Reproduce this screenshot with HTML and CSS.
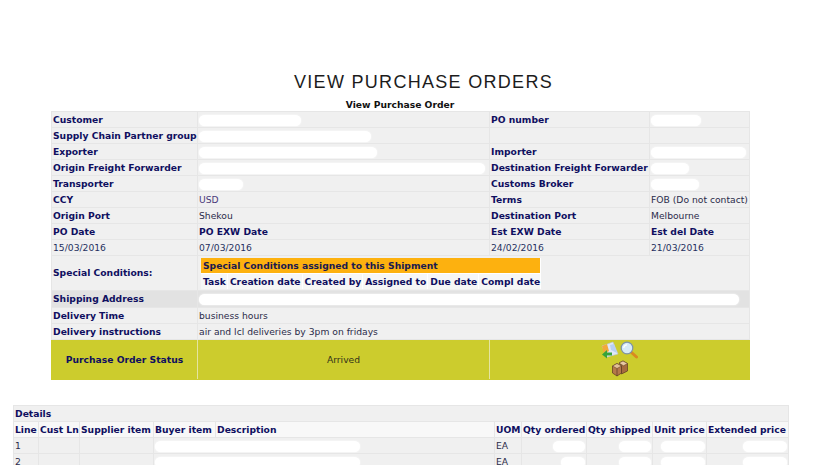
FILE: index.html
```html
<!DOCTYPE html>
<html lang="en">
<head>
    <meta charset="UTF-8">
    <title>View Purchase Orders</title>
    <link rel="stylesheet" href="styles.css">
</head>
<body>
    <h1 class="page-title">VIEW PURCHASE ORDERS</h1>
    <h2 class="order-caption">View Purchase Order</h2>

    <table class="grid order">
        <colgroup>
            <col class="c-label"><col class="c-value"><col class="c-label2"><col class="c-value2">
        </colgroup>
        <tr>
            <th>Customer</th><td><span class="redact r-102"></span></td>
            <th>PO number</th><td><span class="redact r-50"></span></td>
        </tr>
        <tr>
            <th>Supply Chain Partner group</th><td><span class="redact r-172"></span></td>
            <th></th><td></td>
        </tr>
        <tr>
            <th>Exporter</th><td><span class="redact r-178"></span></td>
            <th>Importer</th><td><span class="redact r-95"></span></td>
        </tr>
        <tr>
            <th>Origin Freight Forwarder</th><td><span class="redact r-286"></span></td>
            <th>Destination Freight Forwarder</th><td><span class="redact r-38"></span></td>
        </tr>
        <tr>
            <th>Transporter</th><td><span class="redact r-44"></span></td>
            <th>Customs Broker</th><td><span class="redact r-48"></span></td>
        </tr>
        <tr>
            <th>CCY</th><td class="ccy">USD</td>
            <th>Terms</th><td>FOB (Do not contact)</td>
        </tr>
        <tr>
            <th>Origin Port</th><td>Shekou</td>
            <th>Destination Port</th><td>Melbourne</td>
        </tr>
        <tr>
            <th>PO Date</th><th>PO EXW Date</th>
            <th>Est EXW Date</th><th>Est del Date</th>
        </tr>
        <tr class="dates">
            <td>15/03/2016</td><td>07/03/2016</td>
            <td>24/02/2016</td><td>21/03/2016</td>
        </tr>
        <tr class="special">
            <th>Special Conditions:</th>
            <td colspan="3">
                <table class="conditions">
                    <tr><th colspan="6" class="conditions-head">Special Conditions assigned to this Shipment</th></tr>
                    <tr>
                        <th>Task</th><th>Creation date</th><th>Created by</th>
                        <th>Assigned to</th><th>Due date</th><th>Compl date</th>
                    </tr>
                </table>
            </td>
        </tr>
        <tr class="shipping">
            <th>Shipping Address</th>
            <td colspan="3"><span class="redact r-540"></span></td>
        </tr>
        <tr>
            <th>Delivery Time</th><td colspan="3">business hours</td>
        </tr>
        <tr>
            <th>Delivery instructions</th><td colspan="3">air and lcl deliveries by 3pm on fridays</td>
        </tr>
        <tr class="status">
            <th>Purchase Order Status</th>
            <td>Arrived</td>
            <td colspan="2">
                <div class="status-icons">
                    <svg width="18" height="18" viewBox="0 0 18 18">
                        <path d="M1 5 L12 1 L17 13 L6 16 Z" fill="#dfe8f6" stroke="#b9c4d6" stroke-width="0.6"/>
                        <path d="M1 5 L6 3 L8 10 L3 13 Z" fill="#f2a93a"/>
                        <path d="M9 4 L13 3 L16 12 L10 9 Z" fill="#b9d0f2"/>
                        <path d="M1 13.5 L6 9 L6 11.5 L11 11.5 L11 14.5 L6 14.5 L6 17.5 Z" fill="#37a33a"/>
                    </svg>
                    <svg width="18" height="18" viewBox="0 0 18 18">
                        <path d="M11 11 L16.5 16" stroke="#d98a1f" stroke-width="3" stroke-linecap="round"/>
                        <circle cx="7" cy="7" r="5.8" fill="#d7ebf7" stroke="#7d93a8" stroke-width="1.2"/>
                        <path d="M3.8 7 A3.2 3.2 0 0 1 7 3.8" fill="none" stroke="#fff" stroke-width="1.2"/>
                    </svg>
                </div>
                <div class="status-icons">
                    <svg width="18" height="18" viewBox="0 0 18 18">
                        <path d="M1.5 6 L6 3.5 L10.5 6 L10.5 13 L6 16 L1.5 13 Z" fill="#b5794a" stroke="#5a3a22" stroke-width="0.7"/>
                        <path d="M8 3 L12 1 L16.5 3.5 L16.5 11 L10.5 14 L10.5 6 Z" fill="#a66c3f" stroke="#5a3a22" stroke-width="0.7"/>
                        <path d="M1.5 6 L6 8.5 L10.5 6 L6 3.5 Z" fill="#e3c096" stroke="#5a3a22" stroke-width="0.5"/>
                        <path d="M8 3 L12 1 L16.5 3.5 L12.5 5.8 Z" fill="#e8c9a2" stroke="#5a3a22" stroke-width="0.5"/>
                        <path d="M6 8.5 L6 16" stroke="#5a3a22" stroke-width="0.7"/>
                    </svg>
                </div>
            </td>
        </tr>
    </table>

    <table class="grid details">
        <colgroup>
            <col class="d-line"><col class="d-cust"><col class="d-supplier"><col class="d-buyer"><col class="d-desc">
            <col class="d-uom"><col class="d-ordered"><col class="d-shipped"><col class="d-unit"><col class="d-ext">
        </colgroup>
        <tr class="details-title"><th colspan="10">Details</th></tr>
        <tr class="details-head">
            <th>Line</th><th>Cust Ln</th><th>Supplier item</th><th>Buyer item</th><th>Description</th>
            <th>UOM</th><th>Qty ordered</th><th>Qty shipped</th><th>Unit price</th><th>Extended price</th>
        </tr>
        <tr>
            <td>1</td><td></td><td></td>
            <td colspan="2"><span class="redact r-205"></span></td>
            <td>EA</td>
            <td class="num"><span class="redact r-32"></span></td>
            <td class="num"><span class="redact r-32"></span></td>
            <td class="num"><span class="redact r-44"></span></td>
            <td class="num"><span class="redact r-44"></span></td>
        </tr>
        <tr>
            <td>2</td><td></td><td></td>
            <td colspan="2"><span class="redact r-205"></span></td>
            <td>EA</td>
            <td class="num"><span class="redact r-24"></span></td>
            <td class="num"><span class="redact r-32"></span></td>
            <td class="num"><span class="redact r-44"></span></td>
            <td class="num"><span class="redact r-44"></span></td>
        </tr>
    </table>
</body>
</html>
```

FILE: styles.css
```css
html, body {
    height: 465px;
    overflow: hidden;
}

body {
    margin: 0;
    background-color: #fff;
    font-family: "DejaVu Sans", Verdana, sans-serif;
    font-size: 9.2px;
    color: #2b2b4a;
}

.page-title {
    margin: 0;
    padding: 71px 0 0 28px;
    height: 22px;
    line-height: 22px;
    text-align: center;
    font-family: "Liberation Sans", Arial, sans-serif;
    font-size: 18px;
    font-weight: normal;
    letter-spacing: 1.3px;
    color: #1c1c1c;
}

.order-caption {
    width: 800px;
    margin: 6px 0 0;
    height: 12px;
    line-height: 12px;
    text-align: center;
    font-size: 9.2px;
    font-weight: bold;
    color: #111;
}

table {
    border-collapse: collapse;
}

.grid {
    table-layout: fixed;
    background-color: #f0f0f0;
}

.grid > tbody > tr > th,
.grid > tbody > tr > td {
    height: 15px;
    padding: 0 1px;
    border: 1px solid #e6e6e6;
    white-space: nowrap;
    overflow: hidden;
    line-height: 14px;
}

th {
    text-align: left;
    font-weight: bold;
    color: #0f0f60;
}

.order {
    width: 698px;
    margin: 0 0 0 51px;
}

.c-label { width: 146px; }
.c-value { width: 292px; }
.c-label2 { width: 160px; }
.c-value2 { width: 100px; }

.ccy {
    color: #4a3a7a;
}

.dates td {
    color: #26305f;
}

.grid > tbody > .special > th,
.grid > tbody > .special > td {
    height: 34px;
}

.grid > tbody > .special > td {
    padding: 0 3px;
    vertical-align: middle;
}

.conditions {
    width: 339px;
}

.conditions th {
    height: 15px;
    padding: 0 1px 0 2px;
    line-height: 15px;
    background-color: #f6f6f6;
    border-right: 1px solid #fff;
    white-space: nowrap;
}

.conditions th:last-child {
    padding-right: 0;
}

.conditions .conditions-head {
    background-color: #fdb10f;
    color: #1a1a50;
    border-bottom: 1px solid #fff;
}

.grid > tbody > .shipping > th,
.grid > tbody > .shipping > td {
    height: 16px;
    background-color: #e2e2e2;
}

.grid > tbody > .status > th,
.grid > tbody > .status > td {
    height: 39px;
    padding: 0;
    background-color: #cccc2d;
    border-color: #cccc2d;
    text-align: center;
    color: #33331a;
}

.grid > tbody > .status > th {
    color: #0f0f60;
    border-right-color: #e4e4a0;
}

.grid > tbody > .status > td:nth-child(2) {
    border-right-color: #e4e4a0;
}

.status-icons {
    display: flex;
    justify-content: center;
    align-items: center;
    height: 19px;
    gap: 1px;
}

.details {
    width: 775px;
    margin: 25px 0 0 13px;
}

.d-line { width: 25px; }
.d-cust { width: 41px; }
.d-supplier { width: 74px; }
.d-buyer { width: 62px; }
.d-desc { width: 279px; }
.d-uom { width: 27px; }
.d-ordered { width: 65px; }
.d-shipped { width: 66px; }
.d-unit { width: 54px; }
.d-ext { width: 82px; }

.grid > tbody > .details-head > th {
    background-color: #f8f8f8;
}

.num {
    text-align: right;
}

/* blanked out customer data */
.redact {
    display: inline-block;
    height: 11px;
    vertical-align: middle;
    border-radius: 6px;
    background-color: #fff;
    box-shadow: 0 0 2px #fff;
}

.r-24 { width: 24px; }
.r-32 { width: 32px; }
.r-38 { width: 38px; }
.r-44 { width: 44px; }
.r-48 { width: 48px; }
.r-50 { width: 50px; }
.r-95 { width: 95px; }
.r-102 { width: 102px; }
.r-172 { width: 172px; }
.r-178 { width: 178px; }
.r-205 { width: 205px; }
.r-286 { width: 286px; }
.r-540 { width: 540px; }
```
